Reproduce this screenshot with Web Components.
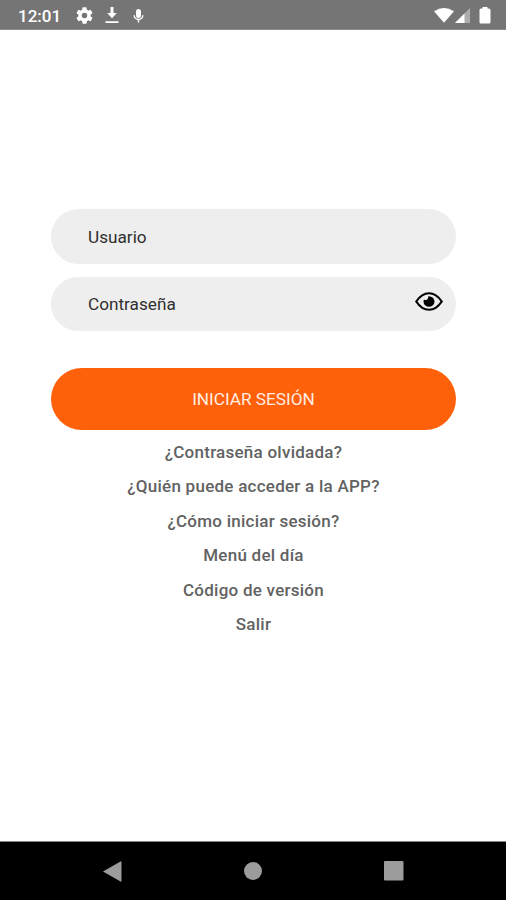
<!DOCTYPE html>
<html lang="es">
<head>
<meta charset="utf-8">
<title>Iniciar sesión</title>
<style>
html,body{margin:0;height:100%;background:#fff}
body{font-family:Roboto,"Liberation Sans",sans-serif;overflow:hidden}
</style>
</head>
<body>
<login-screen></login-screen>
<script>
function define(name, markup) {
  const template = document.createElement('template');
  template.innerHTML = markup;
  customElements.define(name, class extends HTMLElement {
    constructor() {
      super();
      this.attachShadow({ mode: 'open' }).append(template.content.cloneNode(true));
    }
  });
}

define('status-bar', `
<style>
:host{display:flex;justify-content:space-between;box-sizing:border-box;height:30px;padding:0 15px 0 18px;background:#757575;border-bottom:1px solid #8c8c8c;color:#fff}
.group{display:flex;align-items:center;height:30px}
.time{font-size:17px;font-weight:500;line-height:30px;width:44px;margin-right:14px;padding-top:2px;white-space:nowrap}
svg{display:block;fill:#fff}
</style>
<div class="group">
  <span class="time">12:01</span>
  <svg width="17" height="17" viewBox="2 2 20 20"><path d="M19.14 12.94c.04-.3.06-.61.06-.94s-.02-.64-.07-.94l2.03-1.58a.49.49 0 0 0 .12-.61l-1.92-3.32a.49.49 0 0 0-.59-.22l-2.39.96a7 7 0 0 0-1.62-.94l-.36-2.54A.48.48 0 0 0 13.92 2.4h-3.84a.48.48 0 0 0-.48.41l-.36 2.54a7.3 7.3 0 0 0-1.62.94l-2.39-.96a.48.48 0 0 0-.59.22L2.74 8.87a.48.48 0 0 0 .12.61l2.03 1.58a6.5 6.5 0 0 0 0 1.88l-2.03 1.58a.49.49 0 0 0-.12.61l1.92 3.32c.12.22.37.29.59.22l2.39-.96c.5.38 1.03.7 1.62.94l.36 2.54c.05.24.24.41.48.41h3.84c.24 0 .44-.17.47-.41l.36-2.54a7 7 0 0 0 1.62-.94l2.39.96c.22.08.47 0 .59-.22l1.92-3.32a.49.49 0 0 0-.12-.61zM12 15.2a3.2 3.2 0 1 1 0-6.4 3.2 3.2 0 0 1 0 6.4z"/></svg>
  <svg width="14" height="17" viewBox="0 0 14 17" style="margin-left:11.5px"><path d="M5.500 0h3v6h3.300L7 11.200 2.200 6h3.300zM.5 14.200h13v1.800H.5z"/></svg>
  <svg width="11" height="14" viewBox="0 0 11 14" style="margin:1px 0 0 14.5px"><rect x="3" y="0" width="5" height="9" rx="2.500"/><path d="M1.200 6.200a4.300 4.300 0 0 0 8.600 0M5.500 10.500V13.500" fill="none" stroke="#fff" stroke-width="1.500"/></svg>
</div>
<div class="group">
  <svg width="20" height="15" viewBox="0 0 20 15"><path d="M0 3.200Q10-3 20 3.200L10 14.800z"/></svg>
  <svg width="15" height="15" viewBox="0 0 15 15" style="margin-left:1px"><path d="M0 15L15 0V15z" opacity=".4"/><path d="M0 15L9.500 5.500V15z"/></svg>
  <svg width="12" height="17" viewBox="0 0 12 17" style="margin-left:8.500px;margin-right:.5px"><path d="M3.500 0h5v1.500h1.500q1.500 0 1.500 1.500v12q0 1.500-1.500 1.500H2Q.5 16.500.5 15V3Q.5 1.500 2 1.500h1.500z"/></svg>
</div>`);

define('text-field', `
<style>
:host{display:flex;align-items:center;justify-content:space-between;box-sizing:border-box;height:55px;border-radius:28px;padding:var(--field-shift,1px) 13px 0 37px;background:#eee;color:#303030;font-size:17.2px}
</style>
<span><slot></slot></span><slot name="action"></slot>`);

define('eye-icon', `
<style>:host{display:block;margin-top:-5px}svg{display:block}</style>
<svg width="28" height="19" viewBox="0 0 27 19" preserveAspectRatio="none"><path d="M1.200 9.500Q6.500 1.200 13.500 1.200T25.800 9.500Q20.500 17.800 13.500 17.800T1.200 9.500z" fill="none" stroke="#000" stroke-width="2.100"/><path d="M13.500 4.200a5.300 5.300 0 1 1-5.300 5.300q0-1.100.5-2.100a2.600 2.600 0 0 0 4-2.900q.4-.3.800-.3z"/></svg>`);

define('primary-button', `
<style>
:host{display:block}
button{display:block;width:100%;height:61.5px;padding:1px 0 0;border:0;border-radius:31px;background:#ff600a;color:#ffede2;font:400 17.2px/61px Roboto,"Liberation Sans",sans-serif}
</style>
<button type="button"><slot></slot></button>`);

define('text-link', `
<style>
:host{display:block;height:34.4px;line-height:34.4px;text-align:center;color:#626262;font-size:17px;font-weight:500;letter-spacing:.25px;white-space:nowrap}
</style>
<slot></slot>`);

define('nav-bar', `
<style>
:host{display:flex;justify-content:space-between;align-items:center;box-sizing:border-box;height:59px;padding:0 102px;background:#000;border-top:1px solid #888}
svg{display:block;fill:#9c9c9c}
</style>
<svg width="20" height="21" viewBox="0 0 20 21"><path d="M1 10.500L18.500.5Q19.500 0 19.500 1V20Q19.500 21 18.500 20.500z"/></svg>
<svg width="18" height="18" viewBox="0 0 18 18"><circle cx="9" cy="9" r="9"/></svg>
<svg width="20" height="20" viewBox="0 0 20 20"><rect width="19.500" height="19.500" rx="1"/></svg>`);

define('login-screen', `
<style>
:host{display:flex;flex-direction:column;height:900px}
main{flex:1;padding:179px 50px 0 51px}
.fields{display:grid;gap:13px}
.fields text-field + text-field{height:54px;--field-shift:0px}
primary-button{margin-top:37px}
nav{margin-top:5.5px}
</style>
<status-bar></status-bar>
<main>
  <div class="fields">
    <text-field>Usuario</text-field>
    <text-field>Contraseña<eye-icon slot="action"></eye-icon></text-field>
  </div>
  <primary-button>INICIAR SESIÓN</primary-button>
  <nav>
    <text-link>¿Contraseña olvidada?</text-link>
    <text-link>¿Quién puede acceder a la APP?</text-link>
    <text-link>¿Cómo iniciar sesión?</text-link>
    <text-link>Menú del día</text-link>
    <text-link>Código de versión</text-link>
    <text-link>Salir</text-link>
  </nav>
</main>
<nav-bar></nav-bar>`);
</script>
</body>
</html>
